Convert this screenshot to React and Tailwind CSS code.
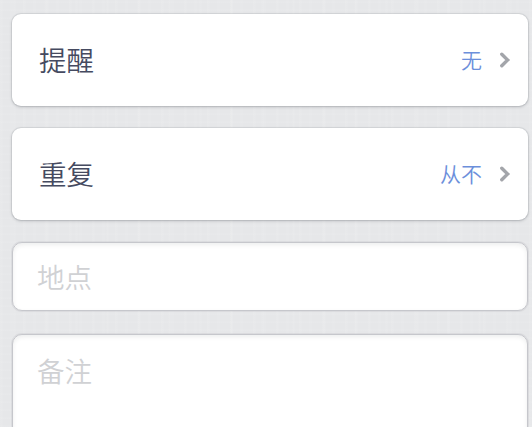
import React, { useState } from 'react';

const Chevron = () => (
  <svg className="ml-[17px] h-4 w-3 shrink-0" viewBox="0 0 12 16" fill="none">
    <path d="M2.8 2.2L8.7 8L2.8 13.8" stroke="#a3a5aa" strokeWidth="3.4" strokeLinecap="round" strokeLinejoin="miter" />
  </svg>
);

const SettingRow = ({ label, value }) => (
  <button
    type="button"
    className="flex h-[92px] w-full items-center rounded-[9px] bg-white pb-0.5 pl-[27px] pr-[17px] shadow-[0_0_0_1px_rgba(90,94,105,0.1),0_1px_3px_rgba(60,63,72,0.28)]"
  >
    <span className="flex-1 text-left text-[27.5px] leading-10 text-[#454a60]">{label}</span>
    <span className="text-[21px] leading-8 text-[#6c8fdb]">{value}</span>
    <span className="pt-0.5">
      <Chevron />
    </span>
  </button>
);

const fieldClass =
  'block w-full resize-none rounded-[10px] border border-[#c6c7cc] bg-white px-6 text-[27.5px] leading-10 text-[#454a60] placeholder-[#d0d1d4] shadow-[0_0_0_1px_rgba(90,94,105,0.08),inset_0_2px_4px_rgba(60,63,72,0.09)] outline-none';

const App = () => {
  const [place, setPlace] = useState('');
  const [note, setNote] = useState('');

  return (
    <div className="h-[427px] w-full overflow-hidden bg-[#e6e7e9] bg-[repeating-linear-gradient(90deg,rgba(255,255,255,0.07)_0_2px,transparent_4px_9px,rgba(255,255,255,0.06)_11px_12px,transparent_14px_23px),repeating-linear-gradient(90deg,transparent_0_13px,rgba(255,255,255,0.07)_14px_15px,transparent_17px_31px),repeating-linear-gradient(0deg,rgba(255,255,255,0.07)_0_1px,transparent_3px_8px)] pl-3 pr-1 pt-3.5 font-['Noto_Sans_CJK_SC',sans-serif] font-[350]">
      <div className="space-y-[22px]">
        <SettingRow label="提醒" value="无" />
        <SettingRow label="重复" value="从不" />
      </div>

      {/* Free text fields */}
      <div className="mt-[22px] space-y-[23px]">
        <input
          type="text"
          placeholder="地点"
          value={place}
          onChange={(e) => setPlace(e.target.value)}
          className={`${fieldClass} h-[69px] pb-0.5`}
        />
        <textarea
          placeholder="备注"
          value={note}
          onChange={(e) => setNote(e.target.value)}
          className={`${fieldClass} h-[140px] pt-[15px]`}
        />
      </div>
    </div>
  );
};

export default App;
